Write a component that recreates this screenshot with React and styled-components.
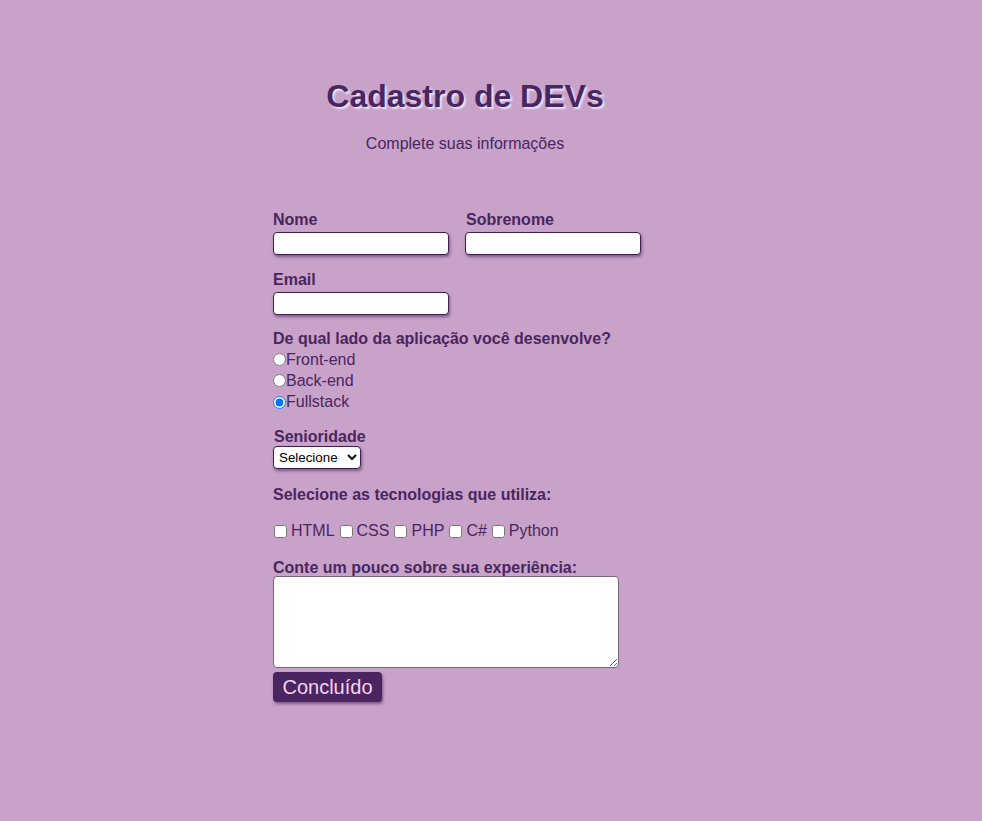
import React from "react";
import styled, { createGlobalStyle } from "styled-components";

const Global = createGlobalStyle`
  html, body { margin: 0; padding: 0; background: #c8a2c8; }
  body { font-family: "Liberation Sans", Arial, sans-serif; color: #4a2660; }
`;

const Page = styled.div`
  min-height: 821px;
  background: #c8a2c8;
  padding: 78px 0 0 273px;
  box-sizing: border-box;
`;

const Container = styled.div`
  width: 384px;
  display: flex;
  flex-direction: column;
`;

const Title = styled.h1`
  margin: 0;
  font-size: 32px;
  line-height: 37px;
  font-weight: bold;
  text-align: center;
  color: #4a2660;
  text-shadow: 2px 2px 2px rgba(236, 230, 255, 0.95);
`;

const Subtitle = styled.p`
  margin: 20px 0 0;
  font-size: 16px;
  line-height: 18px;
  text-align: center;
  color: #4a2660;
`;

const Form = styled.form`
  margin-top: 58px;
  display: flex;
  flex-direction: column;
  align-items: flex-start;
`;

const Row = styled.div`
  display: flex;
  gap: 16px;
  margin-bottom: ${(p) => p.$mb || 0}px;
`;

const Field = styled.div`
  display: flex;
  flex-direction: column;
  align-items: flex-start;
  margin-bottom: ${(p) => p.$mb || 0}px;
  padding-left: ${(p) => p.$indent || 0}px;
`;

const Label = styled.label`
  font-size: 16px;
  line-height: 18px;
  font-weight: bold;
  color: #4a2660;
  margin-bottom: ${(p) => p.$mb ?? 3}px;
  padding-left: ${(p) => p.$indent || 0}px;
`;

const TextInput = styled.input`
  width: 176px;
  height: 23px;
  box-sizing: border-box;
  border: 1px solid #3f2150;
  border-radius: 4px;
  background: #fff;
  box-shadow: 1px 2px 3px rgba(70, 30, 80, 0.55);
  margin: 0;
  padding: 1px 4px;
  font-family: inherit;
`;

const RadioRow = styled.label`
  display: flex;
  align-items: center;
  height: ${(p) => p.$h || 21}px;
  font-size: 16px;
  color: #4a2660;
`;

const Radio = styled.input`
  margin: 0;
  width: 13px;
  height: 13px;
`;

const Select = styled.select`
  width: 88px;
  height: 23px;
  border: 1px solid #3f2150;
  border-radius: 4px;
  background: #fff;
  color: #000;
  font-family: "Liberation Sans", Arial, sans-serif;
  font-size: 13.33px;
  box-shadow: 1px 2px 3px rgba(70, 30, 80, 0.55);
  margin-left: -1px;
  padding: 0 1px;
`;

const Checks = styled.div`
  display: flex;
  align-items: center;
  height: 18px;
  font-size: 16px;
  color: #4a2660;
  margin-top: 18px;
  margin-bottom: 19px;
  padding-left: 1px;
`;

const CheckItem = styled.label`
  display: flex;
  align-items: center;
  margin-right: 5px;
`;

const Check = styled.input`
  margin: 0 4px 0 0;
  width: 13px;
  height: 13px;
`;

const TextArea = styled.textarea`
  width: 346px;
  height: 92px;
  box-sizing: border-box;
  border: 1px solid #76667c;
  border-radius: 4px;
  background: #fff;
  margin: 0;
  font-family: inherit;
`;

const Button = styled.button`
  margin-top: 4px;
  width: 109px;
  height: 30px;
  border: none;
  border-radius: 4px;
  background: #4b2562;
  color: #f4d3f2;
  font-family: "Liberation Sans", Arial, sans-serif;
  font-size: 20px;
  padding: 0;
  box-shadow: 1px 2px 3px rgba(70, 30, 80, 0.55);
`;

export default function App() {
  const techs = ["HTML", "CSS", "PHP", "C#", "Python"];
  return (
    <>
      <Global />
      <Page>
        <Container>
          <Title>Cadastro de DEVs</Title>
          <Subtitle>Complete suas informações</Subtitle>
          <Form onSubmit={(e) => e.preventDefault()}>
            <Row $mb={16}>
              <Field>
                <Label htmlFor="nome">Nome</Label>
                <TextInput id="nome" type="text" />
              </Field>
              <Field>
                <Label htmlFor="sobrenome" $indent={1}>Sobrenome</Label>
                <TextInput id="sobrenome" type="text" />
              </Field>
            </Row>
            <Field $mb={15}>
              <Label htmlFor="email">Email</Label>
              <TextInput id="email" type="email" />
            </Field>
            <Field $mb={15}>
              <Label $mb={1}>De qual lado da aplicação você desenvolve?</Label>
              <RadioRow>
                <Radio type="radio" name="lado" />
                Front-end
              </RadioRow>
              <RadioRow>
                <Radio type="radio" name="lado" />
                Back-end
              </RadioRow>
              <RadioRow $h={22}>
                <Radio type="radio" name="lado" defaultChecked />
                Fullstack
              </RadioRow>
            </Field>
            <Field $mb={17} $indent={1}>
              <Label htmlFor="sen" $mb={0}>Senioridade</Label>
              <Select id="sen" defaultValue="">
                <option value="">Selecione</option>
                <option>Júnior</option>
                <option>Pleno</option>
                <option>Sênior</option>
              </Select>
            </Field>
            <Label $mb={0}>Selecione as tecnologias que utiliza:</Label>
            <Checks>
              {techs.map((t) => (
                <CheckItem key={t}>
                  <Check type="checkbox" />
                  {t}
                </CheckItem>
              ))}
            </Checks>
            <Field>
              <Label htmlFor="exp" $mb={-1}>Conte um pouco sobre sua experiência:</Label>
              <TextArea id="exp" />
            </Field>
            <Button type="submit">Concluído</Button>
          </Form>
        </Container>
      </Page>
    </>
  );
}
